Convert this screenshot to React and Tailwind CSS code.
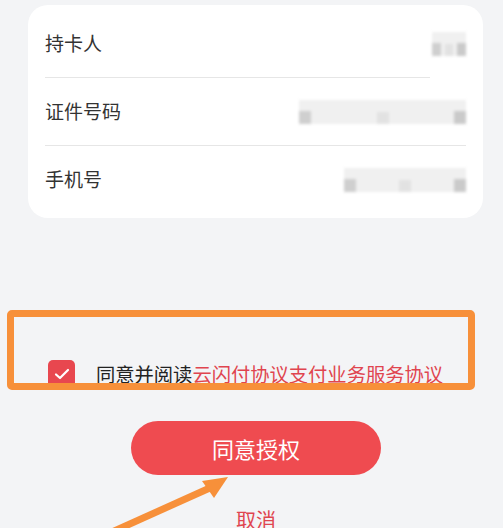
const rows = [
  { label: '持卡人', divider: 'w-[385px]', blur: 'w-[34px]' },
  { label: '证件号码', divider: 'w-full', blur: 'w-[167px]' },
  { label: '手机号', divider: null, blur: 'w-[122px]' }
]

function BlurValue({ width }) {
  return (
    <div className={`${width} h-[24px] flex items-end justify-between gap-1 bg-[#f0f0f0] blur-[1.5px]`}>
      <div className="w-[12px] h-[13px] bg-[#cfcfcf]" />
      <div className="w-[12px] h-[12px] bg-[#e2e2e2]" />
      <div className="w-[12px] h-[13px] bg-[#cacaca]" />
    </div>
  )
}

export default function App() {
  return (
    <div
      className="relative w-[503px] h-[528px] overflow-hidden bg-[#f3f4f6]"
      style={{ fontFamily: '"Noto Sans CJK SC", "Noto Sans", sans-serif' }}
    >
      {/* card */}
      <div className="mx-[28px] mt-[5px] w-[455px] rounded-[20px] bg-white px-[17px] py-[5px]">
        {rows.map((row) => (
          <div key={row.label}>
            <div className="h-[67px] flex items-center justify-between">
              <span className="text-[19px] text-[#333333]">{row.label}</span>
              <BlurValue width={row.blur} />
            </div>
            {row.divider && <div className={`${row.divider} h-px bg-[#e6e6e6]`} />}
          </div>
        ))}
      </div>

      {/* agreement */}
      <div className="mt-[142px] ml-[48px] flex items-start gap-[21px]">
        <div className="w-[27px] h-[28px] rounded-[5px] bg-[#e8474f] flex items-center justify-center">
          <svg width="16" height="12" viewBox="0 0 16 12" fill="none">
            <path d="M2 6.5L6 10L14 2" stroke="white" strokeWidth="2.2" strokeLinecap="round" strokeLinejoin="round" />
          </svg>
        </div>
        <p className="text-[19.3px] leading-[28px] text-[#222222]">
          同意并阅读<span className="text-[#e0454f]">云闪付协议支付业务服务协议</span>
        </p>
      </div>

      {/* button */}
      <button className="mt-[33px] ml-[131px] w-[250px] h-[54px] rounded-full bg-[#ef4b50] text-white text-[22px]">
        同意授权
      </button>

      <div className="mt-[33px] ml-[131px] w-[250px] text-center text-[20px] leading-[24px] text-[#e0454f]">
        取消
      </div>

      {/* annotation box */}
      <div className="absolute left-[7px] top-[310px] w-[468px] h-[80px] border-[7px] border-[#f7903a] rounded-[5px]" />

      {/* annotation arrow */}
      <svg className="absolute left-0 top-0" width="503" height="528" viewBox="0 0 503 528">
        <line x1="112" y1="532" x2="212" y2="487" stroke="#f7903a" strokeWidth="7" />
        <polygon points="228,477 202,481 214,498" fill="#f7903a" />
      </svg>
    </div>
  )
}
